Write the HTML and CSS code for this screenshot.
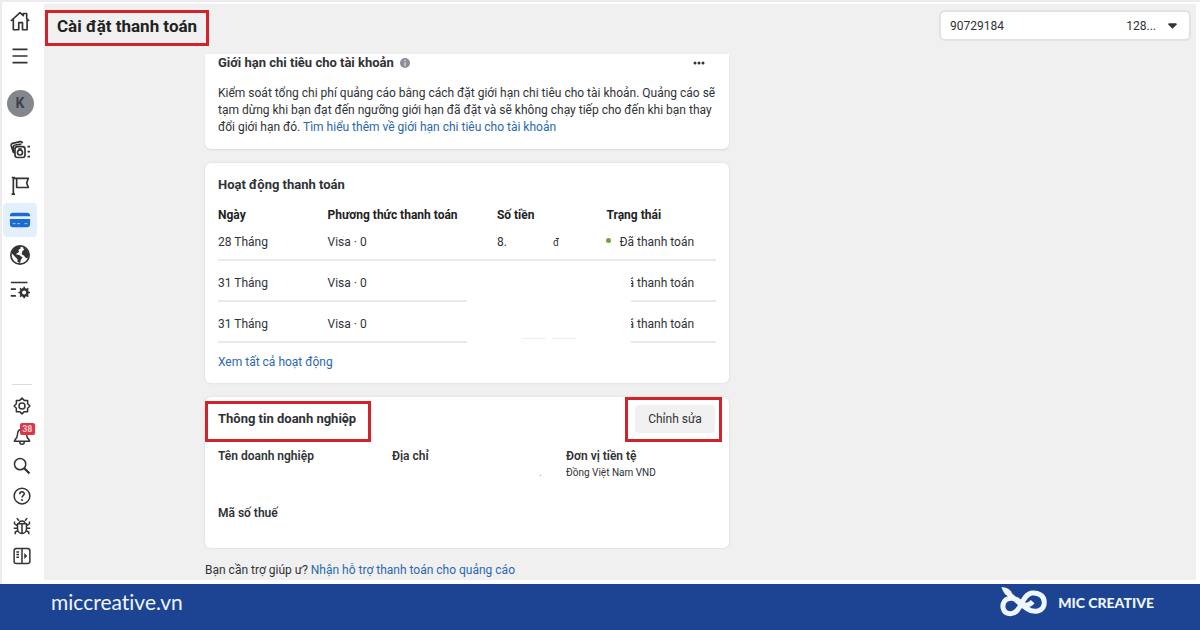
FILE: index.html
```html
<!DOCTYPE html>
<html lang="vi">
<head>
  <meta charset="UTF-8" />
  <meta name="viewport" content="width=device-width, initial-scale=1" />
  <title>Cài đặt thanh toán</title>
  <link rel="stylesheet" href="styles.css">
</head>
<body>
  <div class="app">
    <nav class="sidebar" aria-label="Menu">
      <div class="nav-top">
        <a href="#" class="nav-item" aria-label="Trang chủ">
          <svg class="icon" viewBox="0 0 24 24"><path d="M1 12 12 2l4 3.500V3h4v6l3 3M4 10v12.500h6.500V14H15v8.500h5.500V10" /></svg>
        </a>
        <button class="nav-item" aria-label="Mở menu">
          <svg class="icon" viewBox="0 0 24 24"><path d="M3 4h18M3 12h18M3 20h18" /></svg>
        </button>
        <a href="#" class="nav-item nav-avatar"><span class="avatar">K</span></a>
        <a href="#" class="nav-item" aria-label="Tổng quan">
          <svg class="icon" viewBox="0 0 24 24"><path d="M4 15 1.500 7c-.4-1.500.3-2.500 1.500-3l9-2c1.500-.3 2.500.3 3 2M5 16 4 8.500C4 7 5 6 6.500 6l7-1" /><rect x="6" y="8" width="12" height="13" rx="3" /><circle cx="12" cy="15" r="3" /><path d="M10 11h4M21 8h3M21 14h3M21 20h3" /></svg>
        </a>
        <a href="#" class="nav-item" aria-label="Trang">
          <svg class="icon" viewBox="0 0 24 24"><path d="M4 2v21M2 3h4M2 23h4M4 4h18l-2 5.500 2 5.500H8V4" /></svg>
        </a>
        <a href="#" class="nav-item active" aria-label="Thanh toán">
          <svg class="icon icon-card" viewBox="0 0 24 24"><path d="M1 8V7c0-2 1.500-3 3-3h16c1.500 0 3 1 3 3v1zM1 11h22v6c0 2-1.500 3-3 3H4c-1.500 0-3-1-3-3z" /><path class="card-lines" d="M4 16h3M9 16h3M17 16h3" /></svg>
        </a>
        <a href="#" class="nav-item" aria-label="Toàn cầu">
          <svg class="icon" viewBox="0 0 24 24"><circle cx="12" cy="12" r="11" /><path class="solid" d="M3 6c2-3 5-5 9-5l1 3-3 2 1 2-4 3 4 1 4 3-2 3-1 4-3-2v-3l-4-4-3-3zM15 2l5 3 3 6-1 4-3 1-2-3-3-2 1-4 2-1z" /></svg>
        </a>
        <a href="#" class="nav-item" aria-label="Cài đặt danh sách">
          <svg class="icon" viewBox="0 0 24 24"><path d="M1 3h20M1 11h6M1 19h6" /><circle class="gear-thick" cx="17" cy="15" r="4" /><path d="M17 8v3M17 19v3M10 15h3M21 15h3M12 10l2 2M20 18l2 2M22 10l-2 2M14 18l-2 2" /></svg>
        </a>
      </div>

      <div class="nav-bottom">
        <a href="#" class="nav-item" aria-label="Cài đặt">
          <svg class="icon" viewBox="0 0 24 24"><path d="M12 1.500 15 4.500l4.500 0v4.500l3 3-3 3v4.500H15l-3 3-3-3H4.500V15l-3-3 3-3V4.500H9z" /><circle cx="12" cy="12" r="4" /></svg>
        </a>
        <a href="#" class="nav-item" aria-label="Thông báo">
          <svg class="icon" viewBox="0 0 24 24"><path d="M12 3c-4 0-6 3-6 7 0 3-1 5-4 8v1h20v-1c-3-3-4-5-4-8 0-4-2-7-6-7zM9 20c0 4 6 4 6 0" /></svg>
          <span class="badge">38</span>
        </a>
        <button class="nav-item" aria-label="Tìm kiếm">
          <svg class="icon" viewBox="0 0 24 24"><circle cx="9.500" cy="9.500" r="7.500" /><path class="handle" d="m15 15 7 7" /></svg>
        </button>
        <a href="#" class="nav-item" aria-label="Trợ giúp">
          <svg class="icon" viewBox="0 0 24 24"><circle cx="12" cy="12" r="10.500" /><path d="M9 9.500c0-4 6-4 6-.5 0 2.500-3 2.500-3 5M12 16v2.500" /></svg>
        </a>
        <a href="#" class="nav-item" aria-label="Báo lỗi">
          <svg class="icon" viewBox="0 0 24 24"><path d="M6 9h12v6c0 4-2.500 7-6 7s-6-3-6-7zM8 9c0-5 8-5 8 0M12 9v13M8 5 5 1.500M16 5l3-3.500M6 12 2 9V6M18 12l4-3V6M6 15H1M18 15h5M7 18l-4 2v3M17 18l4 2v3" /></svg>
        </a>
        <button class="nav-item" aria-label="Thu gọn">
          <svg class="icon" viewBox="0 0 24 24"><rect x="1.500" y="2" width="21" height="20" rx="3" /><path d="M12 2v20M4.500 6.500H8M4.500 10H8M4.500 13.500H8" /><path class="solid" d="m15 8 4 4-4 4z" /></svg>
        </button>
      </div>
    </nav>

    <main class="main">
      <header class="topbar">
        <h1 class="highlight page-title">Cài đặt thanh toán</h1>
        <div class="account">
          <select class="account-select" aria-label="Tài khoản quảng cáo">
            <option>90729184</option>
          </select>
          <span class="account-end">128...</span>
          <svg class="caret" viewBox="0 0 10 6"><path d="M1 0h8l1 1-5 5-5-5z" /></svg>
        </div>
      </header>

      <div class="content">
        <section class="card card-limit">
          <div class="card-head">
            <h2>Giới hạn chi tiêu cho tài khoản
              <svg class="info" viewBox="0 0 12 12"><circle cx="6" cy="6" r="6" /><path d="M6 2v2M6 5v5" /></svg>
            </h2>
            <button class="more" aria-label="Thêm">
              <svg viewBox="0 0 12 4"><circle cx="2" cy="2" r="1.500" /><circle cx="6" cy="2" r="1.500" /><circle cx="10" cy="2" r="1.500" /></svg>
            </button>
          </div>
          <p>Kiểm soát tổng chi phí quảng cáo bằng cách đặt giới hạn chi tiêu cho tài khoản. Quảng cáo sẽ tạm dừng khi bạn đạt đến ngưỡng giới hạn đã đặt và sẽ không chạy tiếp cho đến khi bạn thay đổi giới hạn đó. <a href="#">Tìm hiểu thêm về giới hạn chi tiêu cho tài khoản</a></p>
        </section>

        <section class="card card-activity">
          <h2>Hoạt động thanh toán</h2>
          <div class="table-wrap">
            <table>
              <thead>
                <tr>
                  <th class="col-date">Ngày</th>
                  <th class="col-method">Phương thức thanh toán</th>
                  <th class="col-amount">Số tiền</th>
                  <th class="col-status">Trạng thái</th>
                </tr>
              </thead>
              <tbody>
                <tr class="first">
                  <td>28 Tháng</td>
                  <td>Visa · 0</td>
                  <td><span class="amount"><span>8.</span><span class="currency">đ</span></span></td>
                  <td><span class="status paid">Đã thanh toán</span></td>
                </tr>
                <tr>
                  <td>31 Tháng</td>
                  <td>Visa · 0</td>
                  <td></td>
                  <td><span class="status">ã thanh toán</span></td>
                </tr>
                <tr>
                  <td>31 Tháng</td>
                  <td>Visa · 0</td>
                  <td></td>
                  <td><span class="status">ã thanh toán</span></td>
                </tr>
              </tbody>
            </table>
            <div class="redacted"><i></i><i></i></div>
          </div>
          <a href="#">Xem tất cả hoạt động</a>
        </section>

        <section class="card card-business">
          <div class="business-head">
            <h2 class="highlight">Thông tin doanh nghiệp</h2>
            <div class="highlight edit-box"><button class="edit">Chỉnh sửa</button></div>
          </div>
          <dl>
            <div><dt>Tên doanh nghiệp</dt></div>
            <div class="address"><dt>Địa chỉ</dt><dd>.</dd></div>
            <div><dt>Đơn vị tiền tệ</dt><dd>Đồng Việt Nam VND</dd></div>
            <div><dt>Mã số thuế</dt></div>
          </dl>
        </section>

        <p class="help">Bạn cần trợ giúp ư? <a href="#">Nhận hỗ trợ thanh toán cho quảng cáo</a></p>
      </div>
    </main>
  </div>

  <footer class="footer">
    <a href="#" class="site">miccreative.vn</a>
    <div class="brand">
      <svg class="logo" viewBox="0 0 144 90">
        <path class="ribbon" d="M20 14C40 34 60 50 80 64 102 80 133 74 133 46 133 26 114 16 96 18 64 22 64 80 32 80 8 80 4 56 14 42 24 30 44 32 56 42 68 54 82 62 98 44" />
        <path class="leaf" d="M4 1c14 0 26 5 31 16l4 14-22-8C12 18 8 10 4 1z" />
      </svg>
      <span>MIC CREATIVE</span>
    </div>
  </footer>
</body>
</html>
```

FILE: styles.css
```css
* {
  box-sizing: border-box;
}
body {
  margin: 0;
  min-height: 100vh;
  display: flex;
  flex-direction: column;
  background: #fff;
  color: #303236;
  font-family: Roboto, "Liberation Sans", sans-serif;
  font-size: 12px;
  line-height: 17px;
}
h1, h2, p, dl, dd {
  margin: 0;
}
a {
  color: #2a68b0;
  text-decoration: none;
}
button {
  border: none;
  background: none;
  padding: 0;
  color: inherit;
  font: inherit;
  cursor: pointer;
}
.app {
  flex: 1;
  display: flex;
  border: solid #ececee;
  border-width: 2px 0 0 2px;
  padding: 2px 4px 4px 0;
}

/* sidebar */
.sidebar {
  width: 42px;
  padding-right: 6px;
  display: flex;
  flex-direction: column;
  justify-content: space-between;
}
.nav-top, .nav-bottom {
  display: flex;
  flex-direction: column;
  align-items: center;
}
.nav-item {
  position: relative;
  width: 34px;
  height: 34px;
  margin-bottom: 1px;
  display: flex;
  align-items: center;
  justify-content: center;
  border-radius: 4px;
  color: #333;
}
.nav-avatar {
  height: 58px;
}
.nav-item.active {
  background: #e3effb;
  color: #1c6bd0;
}
.nav-bottom {
  padding: 6px 0 9px 3px;
}
.nav-bottom::before {
  content: "";
  width: 20px;
  height: 1px;
  margin-bottom: 6px;
  background: #dcdcde;
}
.nav-bottom .nav-item {
  height: 30px;
  margin: 0;
}
.icon {
  width: 20px;
  height: 20px;
  fill: none;
  stroke: currentColor;
  stroke-width: 2;
  stroke-linejoin: round;
}
.nav-bottom .icon {
  width: 18px;
  height: 18px;
}
.icon .solid {
  fill: currentColor;
  stroke: none;
}
.icon .handle, .icon .gear-thick {
  stroke-width: 3;
}
.icon-card {
  width: 22px;
  height: 22px;
  fill: currentColor;
  stroke: none;
}
.card-lines {
  stroke: #b9d6f6;
  stroke-width: 1;
}
.avatar {
  width: 27px;
  height: 27px;
  border-radius: 50%;
  background: #84878c;
  color: #3b4250;
  font-size: 14px;
  font-weight: 700;
  line-height: 27px;
  text-align: center;
}
.badge {
  position: absolute;
  top: 2px;
  right: 4px;
  padding: 0 2px;
  border-radius: 2px;
  background: #dc3545;
  color: #f6c5ca;
  font-size: 9px;
  font-weight: 700;
  line-height: 12px;
}

/* main column */
.main {
  flex: 1;
  background: #f0f0f1;
}
.highlight {
  border: 3px solid #cf242b;
}
.topbar {
  height: 50px;
  padding: 6px 5px 0 1px;
  display: flex;
  justify-content: space-between;
  align-items: flex-start;
}
.page-title {
  padding: 3px 9px 7px;
  color: #222;
  font-size: 17px;
  font-weight: 700;
  line-height: 20px;
}
.account {
  width: 252px;
  height: 31px;
  padding: 1px 12px 0 9px;
  display: flex;
  align-items: center;
  border: 2px solid #e2e2e4;
  border-radius: 6px;
  background: #fff;
}
.account-select {
  flex: 1;
  appearance: none;
  border: none;
  background: none;
  padding: 0;
  color: inherit;
  font: inherit;
}
.account-end {
  margin-right: 12px;
}
.caret {
  width: 9px;
  height: 6px;
  fill: #333;
}
.content {
  max-width: 524px;
  margin-left: 161px;
}
.card {
  margin-bottom: 14px;
  padding: 13px 13px 12px;
  border-radius: 6px;
  background: #fff;
  box-shadow: 0 0 3px rgba(0, 0, 0, 0.1);
}
h2 {
  font-size: 13px;
  font-weight: 700;
  line-height: 18px;
}
.card-limit {
  padding: 0 9px 13px 13px;
  border-radius: 0 0 6px 6px;
  box-shadow: 0 1px 2px rgba(0, 0, 0, 0.1);
}
.card-head {
  margin-bottom: 13px;
  display: flex;
  justify-content: space-between;
}
.info {
  width: 10px;
  height: 10px;
  margin-left: 3px;
  vertical-align: -1px;
  fill: #8b8f99;
  stroke: #fff;
}
.info circle {
  stroke: none;
}
.more {
  padding: 0 14px;
}
.more svg {
  display: block;
  width: 14px;
  height: 4px;
  fill: #333;
}

/* payment activity */
.card-activity h2 {
  margin-bottom: 12px;
}
.table-wrap {
  position: relative;
  margin-bottom: 11px;
}
table {
  width: 100%;
  border-collapse: collapse;
  table-layout: fixed;
}
th, td {
  padding: 0;
  text-align: left;
}
th {
  height: 18px;
  color: #222;
  font-weight: 700;
}
td {
  height: 41px;
  padding-top: 6px;
  border-bottom: 2px solid #e9e9eb;
}
.first td {
  height: 36px;
  padding-top: 1px;
}
.col-date, .col-amount, .col-status {
  width: 22%;
}
.amount {
  width: 62px;
  display: flex;
  justify-content: space-between;
}
.currency {
  font-size: 10px;
}
.status {
  padding-left: 21px;
}
.status.paid {
  padding-left: 0;
}
.paid::before {
  content: "";
  display: inline-block;
  width: 5px;
  height: 5px;
  margin-right: 8px;
  border-radius: 50%;
  background: #6fa53a;
  vertical-align: 3px;
}
.redacted {
  position: absolute;
  top: 58px;
  bottom: 0;
  left: 50%;
  right: 17%;
  padding-bottom: 4px;
  display: flex;
  align-items: flex-end;
  justify-content: center;
  gap: 6px;
  background: #fff;
}
.redacted i {
  width: 24px;
  height: 1px;
  background: #eee;
}

/* business info */
.card-business {
  padding: 0 7px 26px 0;
}
.business-head {
  margin-bottom: 6px;
  display: flex;
  justify-content: space-between;
}
.business-head h2 {
  margin-top: 4px;
  padding: 6px 12px 11px 10px;
}
.edit-box {
  padding: 5px 4px 5px 7px;
}
.edit {
  width: 80px;
  height: 28px;
  border-radius: 4px;
  background: #f1f1f2;
}
dl {
  padding: 0 6px 0 13px;
  display: grid;
  grid-template-columns: repeat(3, 1fr);
  column-gap: 24px;
  row-gap: 24px;
}
dt {
  font-weight: 600;
}
dd {
  font-size: 10px;
  line-height: 16px;
}
.address dd {
  text-align: right;
  color: #999;
}

/* footer */
.footer {
  height: 46px;
  padding: 0 46px 0 51px;
  display: flex;
  justify-content: space-between;
  align-items: center;
  background: #1d4492;
  color: #eef6ff;
  font-family: Lato, "Open Sans", sans-serif;
}
.site {
  margin-bottom: 10px;
  color: inherit;
  font-size: 21px;
  font-variant-ligatures: none;
  line-height: 24px;
}
.brand {
  margin-bottom: 10px;
  display: flex;
  align-items: center;
  gap: 10px;
  font-size: 14px;
  font-weight: 900;
}
.logo {
  width: 48px;
  height: 30px;
}
.ribbon {
  fill: none;
  stroke: currentColor;
  stroke-width: 15;
}
.leaf {
  fill: currentColor;
}
```
